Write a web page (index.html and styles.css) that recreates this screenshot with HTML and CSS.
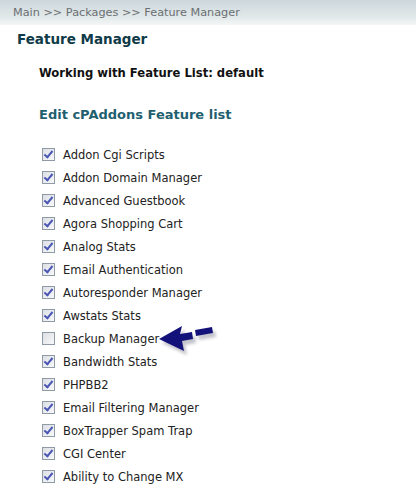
FILE: index.html
```html
<!DOCTYPE html>
<html>
<head>
<meta charset="utf-8">
<link rel="stylesheet" href="styles.css">
</head>
<body>
<div class="crumbs">Main &gt;&gt; Packages &gt;&gt; Feature Manager</div>
<h1 class="title">Feature Manager</h1>
<div class="content">
  <div class="working">Working with Feature List: default</div>
  <h2 class="edit">Edit cPAddons Feature list</h2>
  <ul class="features">
    <li><span class="cb on"></span>Addon Cgi Scripts</li>
    <li><span class="cb on"></span>Addon Domain Manager</li>
    <li><span class="cb on"></span>Advanced Guestbook</li>
    <li><span class="cb on"></span>Agora Shopping Cart</li>
    <li><span class="cb on"></span>Analog Stats</li>
    <li><span class="cb on"></span>Email Authentication</li>
    <li><span class="cb on"></span>Autoresponder Manager</li>
    <li><span class="cb on"></span>Awstats Stats</li>
    <li class="marked"><span class="cb"></span>Backup Manager
      <svg class="arrow" width="66" height="38" viewBox="0 0 66 38">
        <defs><filter id="sh" x="-20%" y="-30%" width="150%" height="170%"><feGaussianBlur stdDeviation="1.6"/></filter></defs>
        <g transform="translate(3,4)" fill="#7c7c90" opacity="0.45" filter="url(#sh)">
          <path d="M4 18 L27 5 L25 13 L37 11 L38 18 L27 20 L29 30 Z"/>
          <path d="M40 9 L57 6 L58 12 L41 15 Z"/>
        </g>
        <path fill="#12127a" d="M4 18 L27 5 L25 13 L37 11 L38 18 L27 20 L29 30 Z"/>
        <path fill="#12127a" d="M40 9 L57 6 L58 12 L41 15 Z"/>
      </svg>
    </li>
    <li><span class="cb on"></span>Bandwidth Stats</li>
    <li><span class="cb on"></span>PHPBB2</li>
    <li><span class="cb on"></span>Email Filtering Manager</li>
    <li><span class="cb on"></span>BoxTrapper Spam Trap</li>
    <li><span class="cb on"></span>CGI Center</li>
    <li><span class="cb on"></span>Ability to Change MX</li>
    <li class="last"><span class="cb on"></span></li>
  </ul>
</div>
</body>
</html>
```
FILE: styles.css
```css
html, body {
  margin: 0;
  padding: 0;
  background: #fff;
  font-family: "DejaVu Sans", Verdana, sans-serif;
  overflow: hidden;
}
.crumbs {
  height: 25px;
  line-height: 25px;
  padding-left: 13px;
  font-size: 11.25px;
  color: #6b6f72;
  background: linear-gradient(#cdd7dc, #e2e9ea 70%, #f4f7f6);
  white-space: nowrap;
}
.title {
  margin: 5px 0 0 17px;
  font-size: 13.5px;
  font-weight: bold;
  color: #0f3a47;
  line-height: 18px;
}
.content {
  padding-left: 39px;
}
.working {
  margin-top: 17px;
  font-size: 11.6px;
  font-weight: bold;
  color: #111;
  line-height: 16px;
}
.edit {
  margin: 25px 0 0 0;
  font-size: 13px;
  font-weight: bold;
  color: #1f5f6f;
  line-height: 17px;
}
.features {
  list-style: none;
  margin: 20px 0 0 3px;
  padding: 0;
}
.features li {
  display: flex;
  align-items: center;
  height: 23px;
  font-size: 11.5px;
  color: #222;
  white-space: nowrap;
  position: relative;
}
.cb {
  display: inline-block;
  box-sizing: border-box;
  width: 13px;
  height: 13px;
  margin-right: 8px;
  border: 1px solid #8e9aa6;
  background: linear-gradient(135deg, #dcdfe4, #f7f8fa);
  position: relative;
  flex: none;
}
.cb.on::after {
  content: "";
  position: absolute;
  left: 3px;
  top: 0px;
  width: 3px;
  height: 7px;
  border: solid #4a57b5;
  border-width: 0 2px 2px 0;
  transform: rotate(40deg);
}
.arrow {
  position: absolute;
  left: 113px;
  top: -6px;
}
```
